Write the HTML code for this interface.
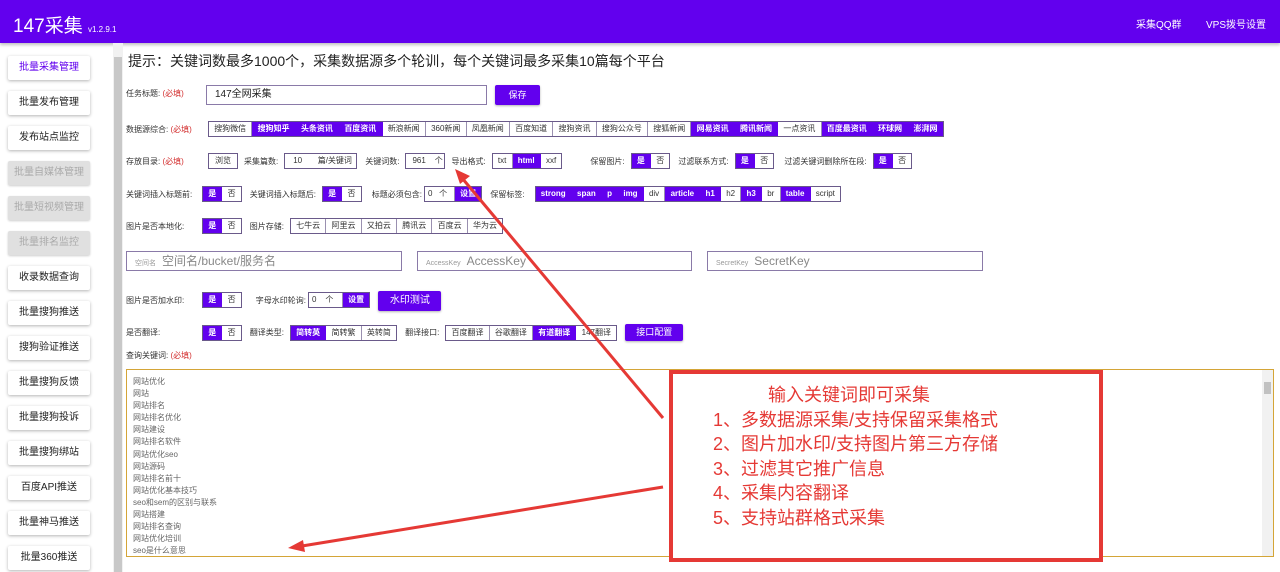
<!DOCTYPE html>
<html><head><meta charset="utf-8"><style>
*{box-sizing:border-box;margin:0;padding:0}
body{width:1280px;height:572px;overflow:hidden;background:#fff;font-family:"Liberation Sans","Noto Sans CJK SC",sans-serif;position:relative;color:#333}
.hdr{position:absolute;left:0;top:0;width:1280px;height:43px;background:#6200ee;box-shadow:0 2px 3px rgba(0,0,0,.25)}
.logo{position:absolute;left:13px;top:11px;color:#fff;font-size:19px}
.logo small{font-size:8px}
.hl{position:absolute;top:16px;color:#fff;font-size:10px}
.sb{position:absolute;left:8px;width:82px;height:24px;background:#fff;box-shadow:0 1px 3px rgba(0,0,0,.3);border-radius:2px;font-size:10px;text-align:center;line-height:24px;color:#222}
.sb.a{color:#6200ee}
.sb.d{background:#e0e0e0;color:#aaa;box-shadow:0 1px 2px rgba(0,0,0,.2)}
.scr{position:absolute;left:113px;top:43px;width:10px;height:529px;background:#f1f1f1}
.scr i{position:absolute;left:1px;top:14px;width:8px;height:515px;background:#c8c8c8}
.ab{position:absolute;font-size:8px;white-space:nowrap;display:flex;align-items:center}
.lb{font-size:8px;color:#333;margin-right:6px;display:inline-block}
.lb em{color:#d32f2f;font-style:normal}
.g{display:inline-flex;border:1px solid #6a5a8a;height:16px;margin-right:8px}
.g span{padding:0 5.2px;line-height:14px;font-size:8px;color:#333;border-right:1px solid #9a90b0;background:#fff}
.g span:last-child{border-right:none}
.g span.p{background:#6200ee;color:#fff;font-weight:bold;border-right-color:#6200ee}
.btn{background:#6200ee;color:#fff;font-size:9px;border-radius:2px;text-align:center;box-shadow:0 1px 2px rgba(0,0,0,.3)}
.inp{position:absolute;border:1px solid #8a7aa8;height:20px;font-size:12px;color:#888;line-height:18px;padding-left:8px}
.inp small{font-size:7px;margin-right:6px;color:#999}
</style></head><body>
<div class="hdr"><div class="logo">147采集 <small>v1.2.9.1</small></div>
<div class="hl" style="left:1136px">采集QQ群</div><div class="hl" style="left:1206px">VPS拨号设置</div></div>

<div class="sb a" style="top:56px">批量采集管理</div>
<div class="sb" style="top:91px">批量发布管理</div>
<div class="sb" style="top:126px">发布站点监控</div>
<div class="sb d" style="top:161px">批量自媒体管理</div>
<div class="sb d" style="top:196px">批量短视频管理</div>
<div class="sb d" style="top:231px">批量排名监控</div>
<div class="sb" style="top:266px">收录数据查询</div>
<div class="sb" style="top:301px">批量搜狗推送</div>
<div class="sb" style="top:336px">搜狗验证推送</div>
<div class="sb" style="top:371px">批量搜狗反馈</div>
<div class="sb" style="top:406px">批量搜狗投诉</div>
<div class="sb" style="top:441px">批量搜狗绑站</div>
<div class="sb" style="top:476px">百度API推送</div>
<div class="sb" style="top:511px">批量神马推送</div>
<div class="sb" style="top:546px">批量360推送</div>
<div class="scr"><i></i></div>

<div style="position:absolute;left:128px;top:51px;font-size:14px;color:#222">提示：关键词数最多1000个，采集数据源多个轮训，每个关键词最多采集10篇每个平台</div>

<div class="ab" style="left:126px;top:88px"><span class="lb">任务标题: <em>(必填)</em></span></div>
<div class="inp" style="left:206px;top:85px;width:281px;color:#222;font-size:10px">147全网采集</div>
<div class="btn" style="position:absolute;left:495px;top:85px;width:45px;height:20px;line-height:20px">保存</div>

<div class="ab" style="left:126px;top:121px"><span class="lb" style="width:82px;margin:0">数据源综合: <em>(必填)</em></span>
<div class="g"><span>搜狗微信</span><span class="p">搜狗知乎</span><span class="p">头条资讯</span><span class="p">百度资讯</span><span>新浪新闻</span><span>360新闻</span><span>凤凰新闻</span><span>百度知道</span><span>搜狗资讯</span><span>搜狗公众号</span><span>搜狐新闻</span><span class="p">网易资讯</span><span class="p">腾讯新闻</span><span>一点资讯</span><span class="p">百度最资讯</span><span class="p">环球网</span><span class="p">澎湃网</span></div></div>

<div class="ab" style="left:126px;top:153px"><span class="lb" style="width:82px;margin:0">存放目录: <em>(必填)</em></span>
<div class="g" style="margin-right:6px"><span style="padding:0 6px">浏览</span></div>
<span class="lb">采集篇数:</span><div class="g" style="margin-right:8px"><span style="width:71px;padding-left:8px">10 &nbsp;&nbsp;&nbsp;&nbsp;&nbsp;&nbsp;篇/关键词</span></div>
<span class="lb">关键词数:</span><div class="g" style="margin-right:6px"><span style="width:38px;padding-left:6px">961 &nbsp;&nbsp;&nbsp;个</span></div>
<span class="lb">导出格式:</span><div class="g" style="margin-right:28px"><span>txt</span><span class="p">html</span><span>xxf</span></div>
<span class="lb">保留图片:</span><div class="g" style="margin-right:8px"><span class="p">是</span><span>否</span></div>
<span class="lb">过滤联系方式:</span><div class="g" style="margin-right:10px"><span class="p">是</span><span>否</span></div>
<span class="lb">过滤关键词删除所在段:</span><div class="g"><span class="p">是</span><span>否</span></div></div>

<div class="ab" style="left:126px;top:186px"><span class="lb" style="width:76px;margin:0">关键词插入标题前:</span><div class="g"><span class="p">是</span><span>否</span></div>
<span class="lb">关键词插入标题后:</span><div class="g" style="margin-right:10px"><span class="p">是</span><span>否</span></div>
<span class="lb" style="margin-right:2px">标题必须包含:</span><div class="g" style="margin-right:8px"><span style="width:30px;padding-left:3px">0 &nbsp;&nbsp;个</span><span class="p">设置</span></div>
<span class="lb" style="margin-right:10px">保留标签:</span><div class="g"><span class="p">strong</span><span class="p">span</span><span class="p">p</span><span class="p">img</span><span>div</span><span class="p">article</span><span class="p">h1</span><span>h2</span><span class="p">h3</span><span>br</span><span class="p">table</span><span>script</span></div></div>

<div class="ab" style="left:126px;top:218px"><span class="lb" style="width:76px;margin:0">图片是否本地化:</span><div class="g"><span class="p">是</span><span>否</span></div>
<span class="lb">图片存储:</span><div class="g"><span>七牛云</span><span>阿里云</span><span>又拍云</span><span>腾讯云</span><span>百度云</span><span>华为云</span></div></div>

<div class="inp" style="left:126px;top:251px;width:276px"><small>空间名</small>空间名/bucket/服务名</div>
<div class="inp" style="left:417px;top:251px;width:275px"><small>AccessKey</small>AccessKey</div>
<div class="inp" style="left:707px;top:251px;width:276px"><small>SecretKey</small>SecretKey</div>

<div class="ab" style="left:126px;top:289px"><span class="lb" style="width:76px;margin:0">图片是否加水印:</span><div class="g" style="margin-right:14px"><span class="p">是</span><span>否</span></div>
<span class="lb" style="margin-right:2px">字母水印轮询:</span><div class="g" style="margin-right:8px"><span style="width:34px;padding-left:3px">0 &nbsp;&nbsp;&nbsp;个</span><span class="p">设置</span></div>
<div class="btn" style="width:63px;height:20px;line-height:20px;font-size:10px;margin-top:2px">水印测试</div></div>

<div class="ab" style="left:126px;top:324px"><span class="lb" style="width:76px;margin:0">是否翻译:</span><div class="g"><span class="p">是</span><span>否</span></div>
<span class="lb">翻译类型:</span><div class="g"><span class="p">简转英</span><span>简转繁</span><span>英转简</span></div>
<span class="lb">翻译接口:</span><div class="g" style="margin-right:8px"><span>百度翻译</span><span>谷歌翻译</span><span class="p">有道翻译</span><span>147翻译</span></div>
<div class="btn" style="width:58px;height:17px;line-height:17px">接口配置</div></div>

<div class="ab" style="left:126px;top:350px"><span class="lb">查询关键词: <em>(必填)</em></span></div>

<div style="position:absolute;left:126px;top:369px;width:1148px;height:188px;border:1px solid #d4a537;overflow:hidden">
<div style="position:absolute;left:6px;top:6px;font-size:8px;line-height:12.1px;color:#666">网站优化<br>网站<br>网站排名<br>网站排名优化<br>网站建设<br>网站排名软件<br>网站优化seo<br>网站源码<br>网站排名前十<br>网站优化基本技巧<br>seo和sem的区别与联系<br>网站搭建<br>网站排名查询<br>网站优化培训<br>seo是什么意思</div>
<div style="position:absolute;right:0;top:0;width:11px;height:186px;background:#f1f1f1"><div style="position:absolute;left:2px;top:12px;width:7px;height:12px;background:#c1c1c1"></div></div>
</div>

<div style="position:absolute;left:669px;top:370px;width:434px;height:192px;border:4px solid #e53935;background:#fff;color:#e53935;font-size:18px;line-height:24.5px">
<div style="padding-left:95px;margin-top:9px">输入关键词即可采集</div>
<div style="padding-left:40px">1、多数据源采集/支持保留采集格式<br>2、图片加水印/支持图片第三方存储<br>3、过滤其它推广信息<br>4、采集内容翻译<br>5、支持站群格式采集</div>
</div>

<svg style="position:absolute;left:0;top:0" width="1280" height="572">
<line x1="663" y1="418" x2="462" y2="178" stroke="#e53935" stroke-width="3"/>
<polygon points="455,169 470,176 460,184" fill="#e53935"/>
<line x1="663" y1="487" x2="302" y2="546" stroke="#e53935" stroke-width="3"/>
<polygon points="288,548 303,540 305,552" fill="#e53935"/>
</svg>
</body></html>
